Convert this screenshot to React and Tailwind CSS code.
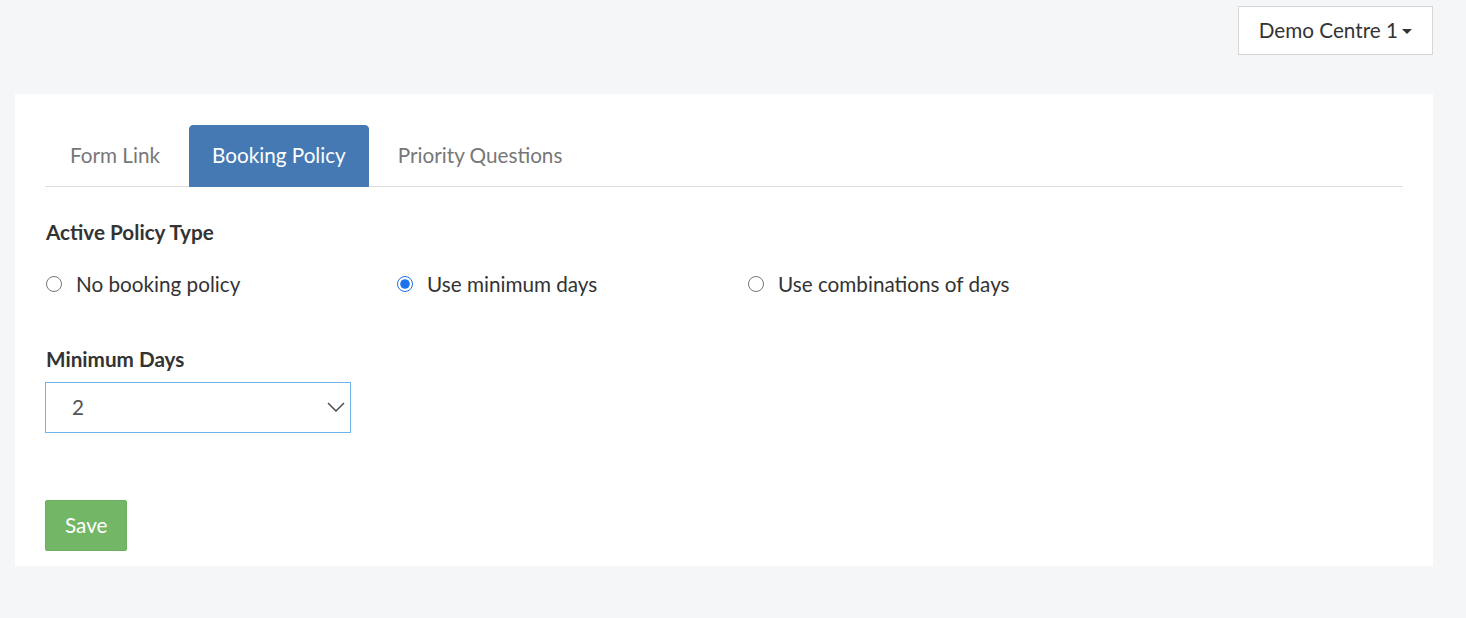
import React, { useState } from "react";

const policies = [
  { id: "none", label: "No booking policy" },
  { id: "min", label: "Use minimum days" },
  { id: "combo", label: "Use combinations of days" },
];

const tabs = ["Form Link", "Booking Policy", "Priority Questions"];

export default function App() {
  const [activeTab, setActiveTab] = useState("Booking Policy");
  const [policy, setPolicy] = useState("min");
  const [days, setDays] = useState("2");

  return (
    <div
      className="min-h-[618px] bg-[#f5f6f8] text-[#333333]"
      style={{ fontFamily: "Lato, 'Open Sans', sans-serif" }}
    >
      {/* top bar */}
      <div className="flex justify-end px-[33px] pt-[6px]">
        <button className="flex h-[49px] items-center gap-[4px] border border-[#d6d6d6] bg-white pl-[20px] pr-[20px] text-[20.7px] text-[#333333]">
          Demo Centre 1
          <span className="mt-[2px] h-0 w-0 border-x-[5px] border-t-[5px] border-x-transparent border-t-[#333333]" />
        </button>
      </div>

      <div className="ml-[15px] mr-[33px] mt-[39px] bg-white px-[30px] pb-[15px] pt-[31px]">
        {/* tabs */}
        <div className="flex border-b border-[#dddddd]">
          {tabs.map((t) => {
            const active = t === activeTab;
            return (
              <button
                key={t}
                onClick={() => setActiveTab(t)}
                className={
                  active
                    ? "-mb-px mr-[4px] h-[62px] rounded-t-[4px] border border-[#4479b3] bg-[#4479b3] px-[22px] text-[20.7px] text-white"
                    : "mr-[4px] h-[61px] px-[25px] text-[20.7px] text-[#777777]"
                }
              >
                {t}
              </button>
            );
          })}
        </div>

        {/* policy type */}
        <div className="mt-[32px] px-[1px] text-[20.7px] font-bold leading-[26px]">
          Active Policy Type
        </div>
        <div className="mt-[26px] flex">
          {policies.map((p) => (
            <label
              key={p.id}
              className="flex w-[351px] cursor-pointer items-center gap-[14px] pl-[1px] text-[20.7px] leading-[26px]"
            >
              <input
                type="radio"
                name="policy"
                checked={policy === p.id}
                onChange={() => setPolicy(p.id)}
                className="m-0 h-[16px] w-[16px] accent-[#1a73e8]"
              />
              {p.label}
            </label>
          ))}
        </div>

        {/* minimum days */}
        <div className="mt-[49px] px-[1px] text-[20.7px] font-bold leading-[26px]">
          Minimum Days
        </div>
        <div className="relative mt-[10px] w-[306px]">
          <select
            value={days}
            onChange={(e) => setDays(e.target.value)}
            className="h-[51px] w-full appearance-none border border-[#74b3ea] bg-white pl-[26px] text-[20.7px] text-[#555555] outline-none"
          >
            {[1, 2, 3, 4, 5].map((n) => (
              <option key={n} value={n}>
                {n}
              </option>
            ))}
          </select>
          <svg
            className="pointer-events-none absolute right-[6px] top-[18px] h-[14px] w-[18px] text-[#444444]"
            viewBox="0 0 18 10"
            fill="none"
            stroke="currentColor"
            strokeWidth="1.4"
          >
            <path d="M1 1l8 8 8-8" />
          </svg>
        </div>

        <button className="mt-[67px] h-[51px] rounded-[2px] border border-[#6aaf5e] bg-[#73b766] px-[19px] text-[20.7px] text-white">
          Save
        </button>
      </div>
    </div>
  );
}
